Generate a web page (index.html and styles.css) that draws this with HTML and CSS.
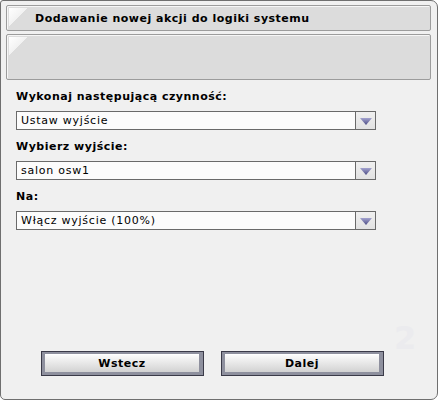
FILE: index.html
```html
<!DOCTYPE html>
<html>
<head>
<meta charset="utf-8">
<link rel="stylesheet" href="styles.css">
</head>
<body>
<div class="window">
  <div class="bar title-bar"><span class="corner"></span><span class="title">Dodawanie nowej akcji do logiki systemu</span></div>
  <div class="bar info-bar"><span class="corner"></span></div>
  <div class="form">
    <div class="field">
      <div class="label">Wykonaj następującą czynność:</div>
      <div class="select"><span class="value">Ustaw wyjście</span><span class="arrow"><svg width="12" height="7" viewBox="0 0 12 7"><defs><linearGradient id="g1" x1="0" y1="0" x2="0" y2="1"><stop offset="0" stop-color="#a4a4d0"/><stop offset="1" stop-color="#4c4c84"/></linearGradient></defs><polygon points="0,0 12,0 6,7" fill="url(#g1)"/></svg></span></div>
    </div>
    <div class="field">
      <div class="label">Wybierz wyjście:</div>
      <div class="select"><span class="value">salon osw1</span><span class="arrow"><svg width="12" height="7" viewBox="0 0 12 7"><polygon points="0,0 12,0 6,7" fill="url(#g1)"/></svg></span></div>
    </div>
    <div class="field">
      <div class="label">Na:</div>
      <div class="select"><span class="value">Włącz wyjście (100%)</span><span class="arrow"><svg width="12" height="7" viewBox="0 0 12 7"><polygon points="0,0 12,0 6,7" fill="url(#g1)"/></svg></span></div>
    </div>
  </div>
  <div class="step">2</div>
  <div class="buttons">
    <div class="btn"><span class="btn-face">Wstecz</span></div>
    <div class="btn"><span class="btn-face">Dalej</span></div>
  </div>
</div>
</body>
</html>
```

FILE: styles.css
```css
* { box-sizing: border-box; }
html, body { margin: 0; padding: 0; background: #ffffff; }
body { font-family: "DejaVu Sans", Verdana, sans-serif; font-size: 11px; color: #000; }

.window {
  position: relative;
  width: 438px;
  height: 400px;
  background: #f0f0f0;
  border: 1px solid #6f6f6f;
  border-radius: 3px 7px 7px 5px;
  padding: 4px 6px 0 5px;
  display: flex;
  flex-direction: column;
}

.bar {
  position: relative;
  background: #dcdcdc;
  border: 1px solid #9c9c9c;
  border-radius: 2px;
  box-shadow: inset 1px 1px 0 #f6f6f6;
}
.corner {
  position: absolute;
  left: 2px;
  top: 2px;
  width: 18px;
  height: 18px;
  background: linear-gradient(to bottom right, #ffffff 0%, #f2f2f2 50%, transparent 50%);
}
.title-bar {
  height: 26px;
  display: flex;
  align-items: center;
  padding-left: 28px;
}
.title { font-weight: bold; font-size: 11px; letter-spacing: 0.5px; }
.info-bar {
  height: 46px;
  margin-top: 3px;
}

.form {
  padding: 10px 0 0 10px;
  display: flex;
  flex-direction: column;
}
.field {
  display: flex;
  flex-direction: column;
  gap: 7px;
  margin-bottom: 10px;
}
.label { font-weight: bold; height: 14px; line-height: 14px; letter-spacing: 0.5px; }
.select {
  width: 360px;
  height: 19px;
  border: 1px solid #6a6a6a;
  background: #fcfcfc;
  display: flex;
  align-items: stretch;
}
.value { flex: 1; padding-left: 4px; line-height: 17px; letter-spacing: 0.75px; }
.arrow {
  width: 20px;
  border-left: 1px solid #6a6a6a;
  background: linear-gradient(#f0f0f0, #e2e2e2);
  display: flex;
  align-items: center;
  justify-content: center;
  padding-top: 1px;
}

.step {
  position: absolute;
  left: 393px;
  top: 318px;
  font-size: 32px;
  font-weight: bold;
  color: #ebebee;
}

.buttons {
  margin-top: auto;
  margin-bottom: 23px;
  padding-left: 35px;
  display: flex;
  gap: 17px;
}
.btn {
  width: 163px;
  height: 25px;
  border: 1px solid #3a3a48;
  background: #8e909e;
  padding: 2px 4px 3px 3px;
  display: flex;
}
.btn-face {
  flex: 1;
  background: linear-gradient(#fbfbfb, #d2d2d2);
  border-top: 1px solid #ffffff;
  display: flex;
  align-items: center;
  justify-content: center;
  font-weight: bold;
  letter-spacing: 0.5px;
}
```
